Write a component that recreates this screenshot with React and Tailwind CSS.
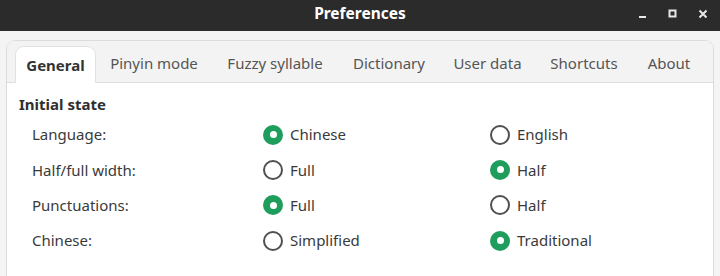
import React from "react";

const tabs = [
  { name: "General", w: "w-[81px]", active: true },
  { name: "Pinyin mode", w: "w-[116px]" },
  { name: "Fuzzy syllable", w: "w-[126px]" },
  { name: "Dictionary", w: "w-[102px]" },
  { name: "User data", w: "w-[95px]" },
  { name: "Shortcuts", w: "w-[98px]" },
  { name: "About", w: "w-[72px]" },
];

const rows = [
  { label: "Language:", a: "Chinese", b: "English", sel: 0 },
  { label: "Half/full width:", a: "Full", b: "Half", sel: 1 },
  { label: "Punctuations:", a: "Full", b: "Half", sel: 0 },
  { label: "Chinese:", a: "Simplified", b: "Traditional", sel: 1 },
];

function Radio({ checked, label }) {
  return (
    <div className="flex items-center gap-[7px]">
      {checked ? (
        <span className="w-[20px] h-[20px] rounded-full bg-[#1f9d5c] flex items-center justify-center">
          <span className="w-[7px] h-[7px] rounded-full bg-white" />
        </span>
      ) : (
        <span className="w-[20px] h-[20px] rounded-full border-2 border-[#505050] bg-white" />
      )}
      <span className="text-[#3a3a3a]">{label}</span>
    </div>
  );
}

export default function App() {
  return (
    <div
      className="w-[720px] h-[276px] bg-[#f4f4f4] overflow-hidden flex flex-col text-[15px]"
      style={{ fontFamily: '"Noto Sans", "Open Sans", sans-serif' }}
    >
      <div className="h-[31px] bg-[#2b2b2b] grid grid-cols-[1fr_auto_1fr] items-center shrink-0">
        <div />
        <div className="text-white font-bold text-[15.5px] pb-[4px]">Preferences</div>
        <div className="flex justify-end items-center gap-[20px] pr-[12px] pb-[3px] text-[#e8e8e8]">
          <svg width="10" height="10" viewBox="0 0 10 10"><rect x="1" y="7" width="7" height="2" fill="currentColor" /></svg>
          <svg width="10" height="10" viewBox="0 0 10 10"><rect x="1.5" y="1.5" width="6" height="6" fill="none" stroke="currentColor" strokeWidth="2" /></svg>
          <svg width="10" height="10" viewBox="0 0 10 10"><path d="M1.5 1.5 L8.5 8.5 M8.5 1.5 L1.5 8.5" stroke="currentColor" strokeWidth="2" /></svg>
        </div>
      </div>
      <div className="flex-1 px-[6px] pt-[9px] flex flex-col">
        <div className="flex-1 border border-[#dcdcdc] border-b-0 rounded-t-[9px] flex flex-col bg-white overflow-hidden">
          <div className="h-[42px] bg-[#f3f3f3] border-b border-[#dedede] flex items-end pl-[8px] shrink-0">
            {tabs.map((t) =>
              t.active ? (
                <div
                  key={t.name}
                  className={`${t.w} h-[37px] -mb-px bg-white rounded-t-[9px] border border-b-0 border-[#e2e2e2] flex items-center justify-center font-bold text-[#333]`}
                >
                  {t.name}
                </div>
              ) : (
                <div key={t.name} className={`${t.w} h-[37px] flex items-center justify-center text-[#555]`}>
                  {t.name}
                </div>
              )
            )}
          </div>
          <div className="pl-[12px] pt-[11px]">
            <div className="font-bold text-[#2f2f2f] leading-[20px]">Initial state</div>
            <div className="pl-[13px] pt-[3px] flex flex-col">
              {rows.map((r) => (
                <div key={r.label} className="grid grid-cols-[231px_227px_1fr] items-center h-[35.3px] text-[#3a3a3a]">
                  <div>{r.label}</div>
                  <Radio checked={r.sel === 0} label={r.a} />
                  <Radio checked={r.sel === 1} label={r.b} />
                </div>
              ))}
            </div>
          </div>
        </div>
      </div>
    </div>
  );
}
